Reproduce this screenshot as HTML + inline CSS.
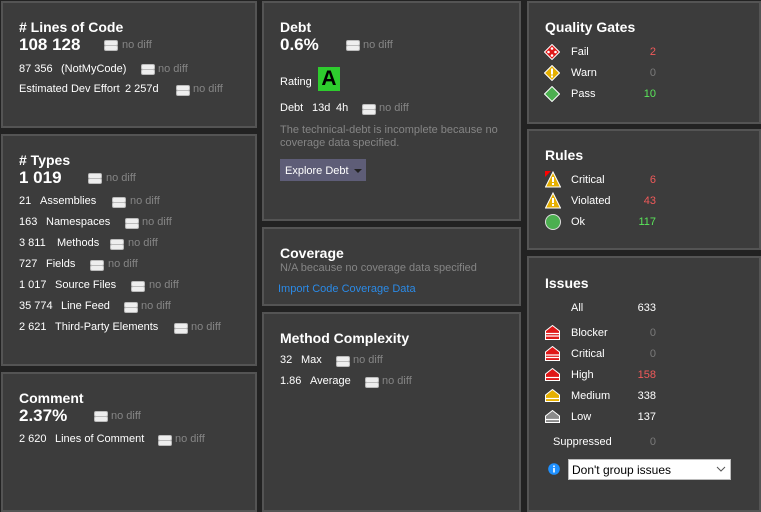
<!DOCTYPE html>
<html><head><meta charset="utf-8"><style>
*{margin:0;padding:0;box-sizing:border-box}
body{width:761px;height:505px;background:#222;position:relative;overflow:hidden;font-family:"Liberation Sans",sans-serif;font-size:11px;color:#fff}
.p{position:absolute;background:#3c3c3c;border:2px solid #545454}
.a{position:absolute;white-space:nowrap;line-height:14px;height:14px}
.h{font-weight:bold;font-size:14px;line-height:18px;height:18px}
.b{font-weight:bold;font-size:17px;line-height:20px;height:20px}
.g{color:#858585}
.eq{position:absolute;width:12px;height:9px}
.eq:before,.eq:after{content:"";position:absolute;left:0;width:12px;height:4px;background:#eee;border-radius:2px;border:1px solid #bbb}
.eq:before{top:0}.eq:after{top:5px}
.r{text-align:right;width:60px}
.red{color:#f05a5a}.grn{color:#5ae65a}.gr{color:#7a7a7a}
</style></head><body>
<div class="p" style="left:1px;top:1px;width:256px;height:127px"></div>
<div class="p" style="left:1px;top:134px;width:256px;height:232px"></div>
<div class="p" style="left:1px;top:372px;width:256px;height:140px"></div>
<div class="p" style="left:262px;top:1px;width:259px;height:220px"></div>
<div class="p" style="left:262px;top:227px;width:259px;height:79px"></div>
<div class="p" style="left:262px;top:312px;width:259px;height:200px"></div>
<div class="p" style="left:527px;top:1px;width:234px;height:123px"></div>
<div class="p" style="left:527px;top:129px;width:234px;height:121px"></div>
<div class="p" style="left:527px;top:256px;width:234px;height:256px"></div>

<!-- col1 -->
<div class="a h" style="left:19px;top:18px"># Lines of Code</div>
<div class="a b" style="left:19px;top:35px">108 128</div><div class="eq" style="left:104px;top:40px"></div><div class="a g" style="left:122px;top:38px">no diff</div>
<div class="a" style="left:19px;top:62px">87 356</div><div class="a" style="left:61px;top:62px">(NotMyCode)</div><div class="eq" style="left:141px;top:64px"></div><div class="a g" style="left:158px;top:62px">no diff</div>
<div class="a" style="left:19px;top:82px">Estimated Dev Effort</div><div class="a" style="left:125px;top:82px">2 257d</div><div class="eq" style="left:176px;top:85px"></div><div class="a g" style="left:193px;top:82px">no diff</div>

<div class="a h" style="left:19px;top:151px"># Types</div>
<div class="a b" style="left:19px;top:168px">1 019</div><div class="eq" style="left:88px;top:173px"></div><div class="a g" style="left:106px;top:171px">no diff</div>
<div class="a" style="left:19px;top:194px">21</div><div class="a" style="left:40px;top:194px">Assemblies</div><div class="eq" style="left:112px;top:197px"></div><div class="a g" style="left:130px;top:194px">no diff</div>
<div class="a" style="left:19px;top:215px">163</div><div class="a" style="left:46px;top:215px">Namespaces</div><div class="eq" style="left:125px;top:218px"></div><div class="a g" style="left:142px;top:215px">no diff</div>
<div class="a" style="left:19px;top:236px">3 811</div><div class="a" style="left:57px;top:236px">Methods</div><div class="eq" style="left:110px;top:239px"></div><div class="a g" style="left:128px;top:236px">no diff</div>
<div class="a" style="left:19px;top:257px">727</div><div class="a" style="left:46px;top:257px">Fields</div><div class="eq" style="left:90px;top:260px"></div><div class="a g" style="left:108px;top:257px">no diff</div>
<div class="a" style="left:19px;top:278px">1 017</div><div class="a" style="left:55px;top:278px">Source Files</div><div class="eq" style="left:131px;top:281px"></div><div class="a g" style="left:149px;top:278px">no diff</div>
<div class="a" style="left:19px;top:299px">35 774</div><div class="a" style="left:61px;top:299px">Line Feed</div><div class="eq" style="left:124px;top:302px"></div><div class="a g" style="left:141px;top:299px">no diff</div>
<div class="a" style="left:19px;top:320px">2 621</div><div class="a" style="left:55px;top:320px">Third-Party Elements</div><div class="eq" style="left:174px;top:323px"></div><div class="a g" style="left:191px;top:320px">no diff</div>

<div class="a h" style="left:19px;top:389px">Comment</div>
<div class="a b" style="left:19px;top:406px">2.37%</div><div class="eq" style="left:94px;top:411px"></div><div class="a g" style="left:111px;top:409px">no diff</div>
<div class="a" style="left:19px;top:432px">2 620</div><div class="a" style="left:55px;top:432px">Lines of Comment</div><div class="eq" style="left:158px;top:435px"></div><div class="a g" style="left:175px;top:432px">no diff</div>

<!-- col2 -->
<div class="a h" style="left:280px;top:18px">Debt</div>
<div class="a b" style="left:280px;top:35px">0.6%</div><div class="eq" style="left:346px;top:40px"></div><div class="a g" style="left:363px;top:38px">no diff</div>
<div class="a" style="left:280px;top:75px">Rating</div>
<div style="position:absolute;left:318px;top:67px;width:22px;height:24px;background:#2ecc2e;color:#000;font-weight:bold;font-size:21px;line-height:24px;text-align:center">A</div>
<div class="a" style="left:280px;top:101px">Debt</div><div class="a" style="left:312px;top:101px">13d</div><div class="a" style="left:336px;top:101px">4h</div><div class="eq" style="left:362px;top:104px"></div><div class="a g" style="left:379px;top:101px">no diff</div>
<div class="a g" style="left:280px;top:123px">The technical-debt is incomplete because no</div>
<div class="a g" style="left:280px;top:136px">coverage data specified.</div>
<div style="position:absolute;left:280px;top:159px;width:86px;height:22px;background:#5e5d77"></div>
<div class="a" style="left:285px;top:164px">Explore Debt</div>
<div style="position:absolute;left:354px;top:169px;border-left:4px solid transparent;border-right:4px solid transparent;border-top:4px solid #222"></div>

<div class="a h" style="left:280px;top:244px">Coverage</div>
<div class="a g" style="left:280px;top:261px">N/A because no coverage data specified</div>
<div class="a" style="left:278px;top:282px;color:#2b8ae6">Import Code Coverage Data</div>

<div class="a h" style="left:280px;top:329px">Method Complexity</div>
<div class="a" style="left:280px;top:353px">32</div><div class="a" style="left:301px;top:353px">Max</div><div class="eq" style="left:336px;top:356px"></div><div class="a g" style="left:353px;top:353px">no diff</div>
<div class="a" style="left:280px;top:374px">1.86</div><div class="a" style="left:310px;top:374px">Average</div><div class="eq" style="left:365px;top:377px"></div><div class="a g" style="left:382px;top:374px">no diff</div>

<!-- col3 -->
<div class="a h" style="left:545px;top:18px">Quality Gates</div>
<svg style="position:absolute;left:544px;top:44px" width="16" height="16"><path d="M8 0.5L15.5 8L8 15.5L0.5 8Z" fill="#e01818" stroke="#fff"/><circle cx="8" cy="4.5" r="1.3" fill="#fff"/><circle cx="8" cy="11.5" r="1.3" fill="#fff"/><circle cx="4.5" cy="8" r="1.3" fill="#fff"/><circle cx="11.5" cy="8" r="1.3" fill="#fff"/></svg>
<svg style="position:absolute;left:544px;top:65px" width="16" height="16"><path d="M8 0.5L15.5 8L8 15.5L0.5 8Z" fill="#e6b000" stroke="#fff"/><rect x="7" y="3.5" width="2" height="6" fill="#fff"/><rect x="7" y="10.5" width="2" height="2" fill="#fff"/></svg>
<svg style="position:absolute;left:544px;top:86px" width="16" height="16"><path d="M8 0.5L15.5 8L8 15.5L0.5 8Z" fill="#4caf50" stroke="#fff"/></svg>
<div class="a" style="left:571px;top:45px">Fail</div><div class="a r red" style="left:596px;top:45px">2</div>
<div class="a" style="left:571px;top:66px">Warn</div><div class="a r gr" style="left:596px;top:66px">0</div>
<div class="a" style="left:571px;top:87px">Pass</div><div class="a r grn" style="left:596px;top:87px">10</div>

<div class="a h" style="left:545px;top:146px">Rules</div>
<svg style="position:absolute;left:545px;top:171px" width="16" height="17"><path d="M8 1L15.5 16H0.5Z" fill="#e6b000" stroke="#fff"/><path d="M0 0H6L0 6Z" fill="#f00"/><rect x="7" y="6" width="2" height="5" fill="#fff"/><rect x="7" y="12" width="2" height="2" fill="#fff"/></svg>
<svg style="position:absolute;left:545px;top:192px" width="16" height="17"><path d="M8 1L15.5 16H0.5Z" fill="#e6b000" stroke="#fff"/><rect x="7" y="6" width="2" height="5" fill="#fff"/><rect x="7" y="12" width="2" height="2" fill="#fff"/></svg>
<svg style="position:absolute;left:545px;top:214px" width="16" height="16"><circle cx="8" cy="8" r="7.5" fill="#4caf50" stroke="#ddd"/></svg>
<div class="a" style="left:571px;top:173px">Critical</div><div class="a r red" style="left:596px;top:173px">6</div>
<div class="a" style="left:571px;top:194px">Violated</div><div class="a r red" style="left:596px;top:194px">43</div>
<div class="a" style="left:571px;top:215px">Ok</div><div class="a r grn" style="left:596px;top:215px">117</div>

<div class="a h" style="left:545px;top:274px">Issues</div>
<div class="a" style="left:571px;top:301px">All</div><div class="a r" style="left:596px;top:301px">633</div>
<svg style="position:absolute;left:545px;top:325px" width="15" height="15"><path d="M7.5 0.5L14.5 6V14.5H0.5V6Z" fill="#e01818" stroke="#fff"/><path d="M1 8.5H14M1 11H14" stroke="#fff" stroke-width="1.2"/></svg>
<svg style="position:absolute;left:545px;top:346px" width="15" height="15"><path d="M7.5 0.5L14.5 6V14.5H0.5V6Z" fill="#e01818" stroke="#fff"/><path d="M1 9H14M1 11.5H14" stroke="#fff" stroke-width="1.2"/></svg>
<svg style="position:absolute;left:545px;top:368px" width="15" height="13"><path d="M7.5 0.5L14.5 6V12.5H0.5V6Z" fill="#e01818" stroke="#fff"/><path d="M1 9.5H14" stroke="#fff" stroke-width="1.2"/></svg>
<svg style="position:absolute;left:545px;top:389px" width="15" height="13"><path d="M7.5 0.5L14.5 6V12.5H0.5V6Z" fill="#e6b000" stroke="#fff"/><path d="M1 9.5H14" stroke="#fff" stroke-width="1.2"/></svg>
<svg style="position:absolute;left:545px;top:410px" width="15" height="13"><path d="M7.5 0.5L14.5 6V12.5H0.5V6Z" fill="#8a8a8a" stroke="#fff"/><path d="M1 9.5H14" stroke="#fff" stroke-width="1.2"/></svg>
<div class="a" style="left:571px;top:326px">Blocker</div><div class="a r gr" style="left:596px;top:326px">0</div>
<div class="a" style="left:571px;top:347px">Critical</div><div class="a r gr" style="left:596px;top:347px">0</div>
<div class="a" style="left:571px;top:368px">High</div><div class="a r red" style="left:596px;top:368px">158</div>
<div class="a" style="left:571px;top:389px">Medium</div><div class="a r" style="left:596px;top:389px">338</div>
<div class="a" style="left:571px;top:410px">Low</div><div class="a r" style="left:596px;top:410px">137</div>
<div class="a" style="left:553px;top:435px">Suppressed</div><div class="a r gr" style="left:596px;top:435px">0</div>
<svg style="position:absolute;left:548px;top:463px" width="12" height="12"><circle cx="6" cy="6" r="5.8" fill="#1e90ff"/><rect x="5.2" y="5" width="1.6" height="4.5" fill="#fff"/><rect x="5.2" y="2.5" width="1.6" height="1.6" fill="#fff"/></svg>
<div style="position:absolute;left:568px;top:459px;width:163px;height:21px;background:#fff;border:1px solid #bbb"></div>
<div class="a" style="left:572px;top:463px;color:#000;font-size:12px">Don't group issues</div>
<svg style="position:absolute;left:716px;top:466px" width="10" height="6"><path d="M1 1L5 5L9 1" fill="none" stroke="#555"/></svg>
</body></html>
